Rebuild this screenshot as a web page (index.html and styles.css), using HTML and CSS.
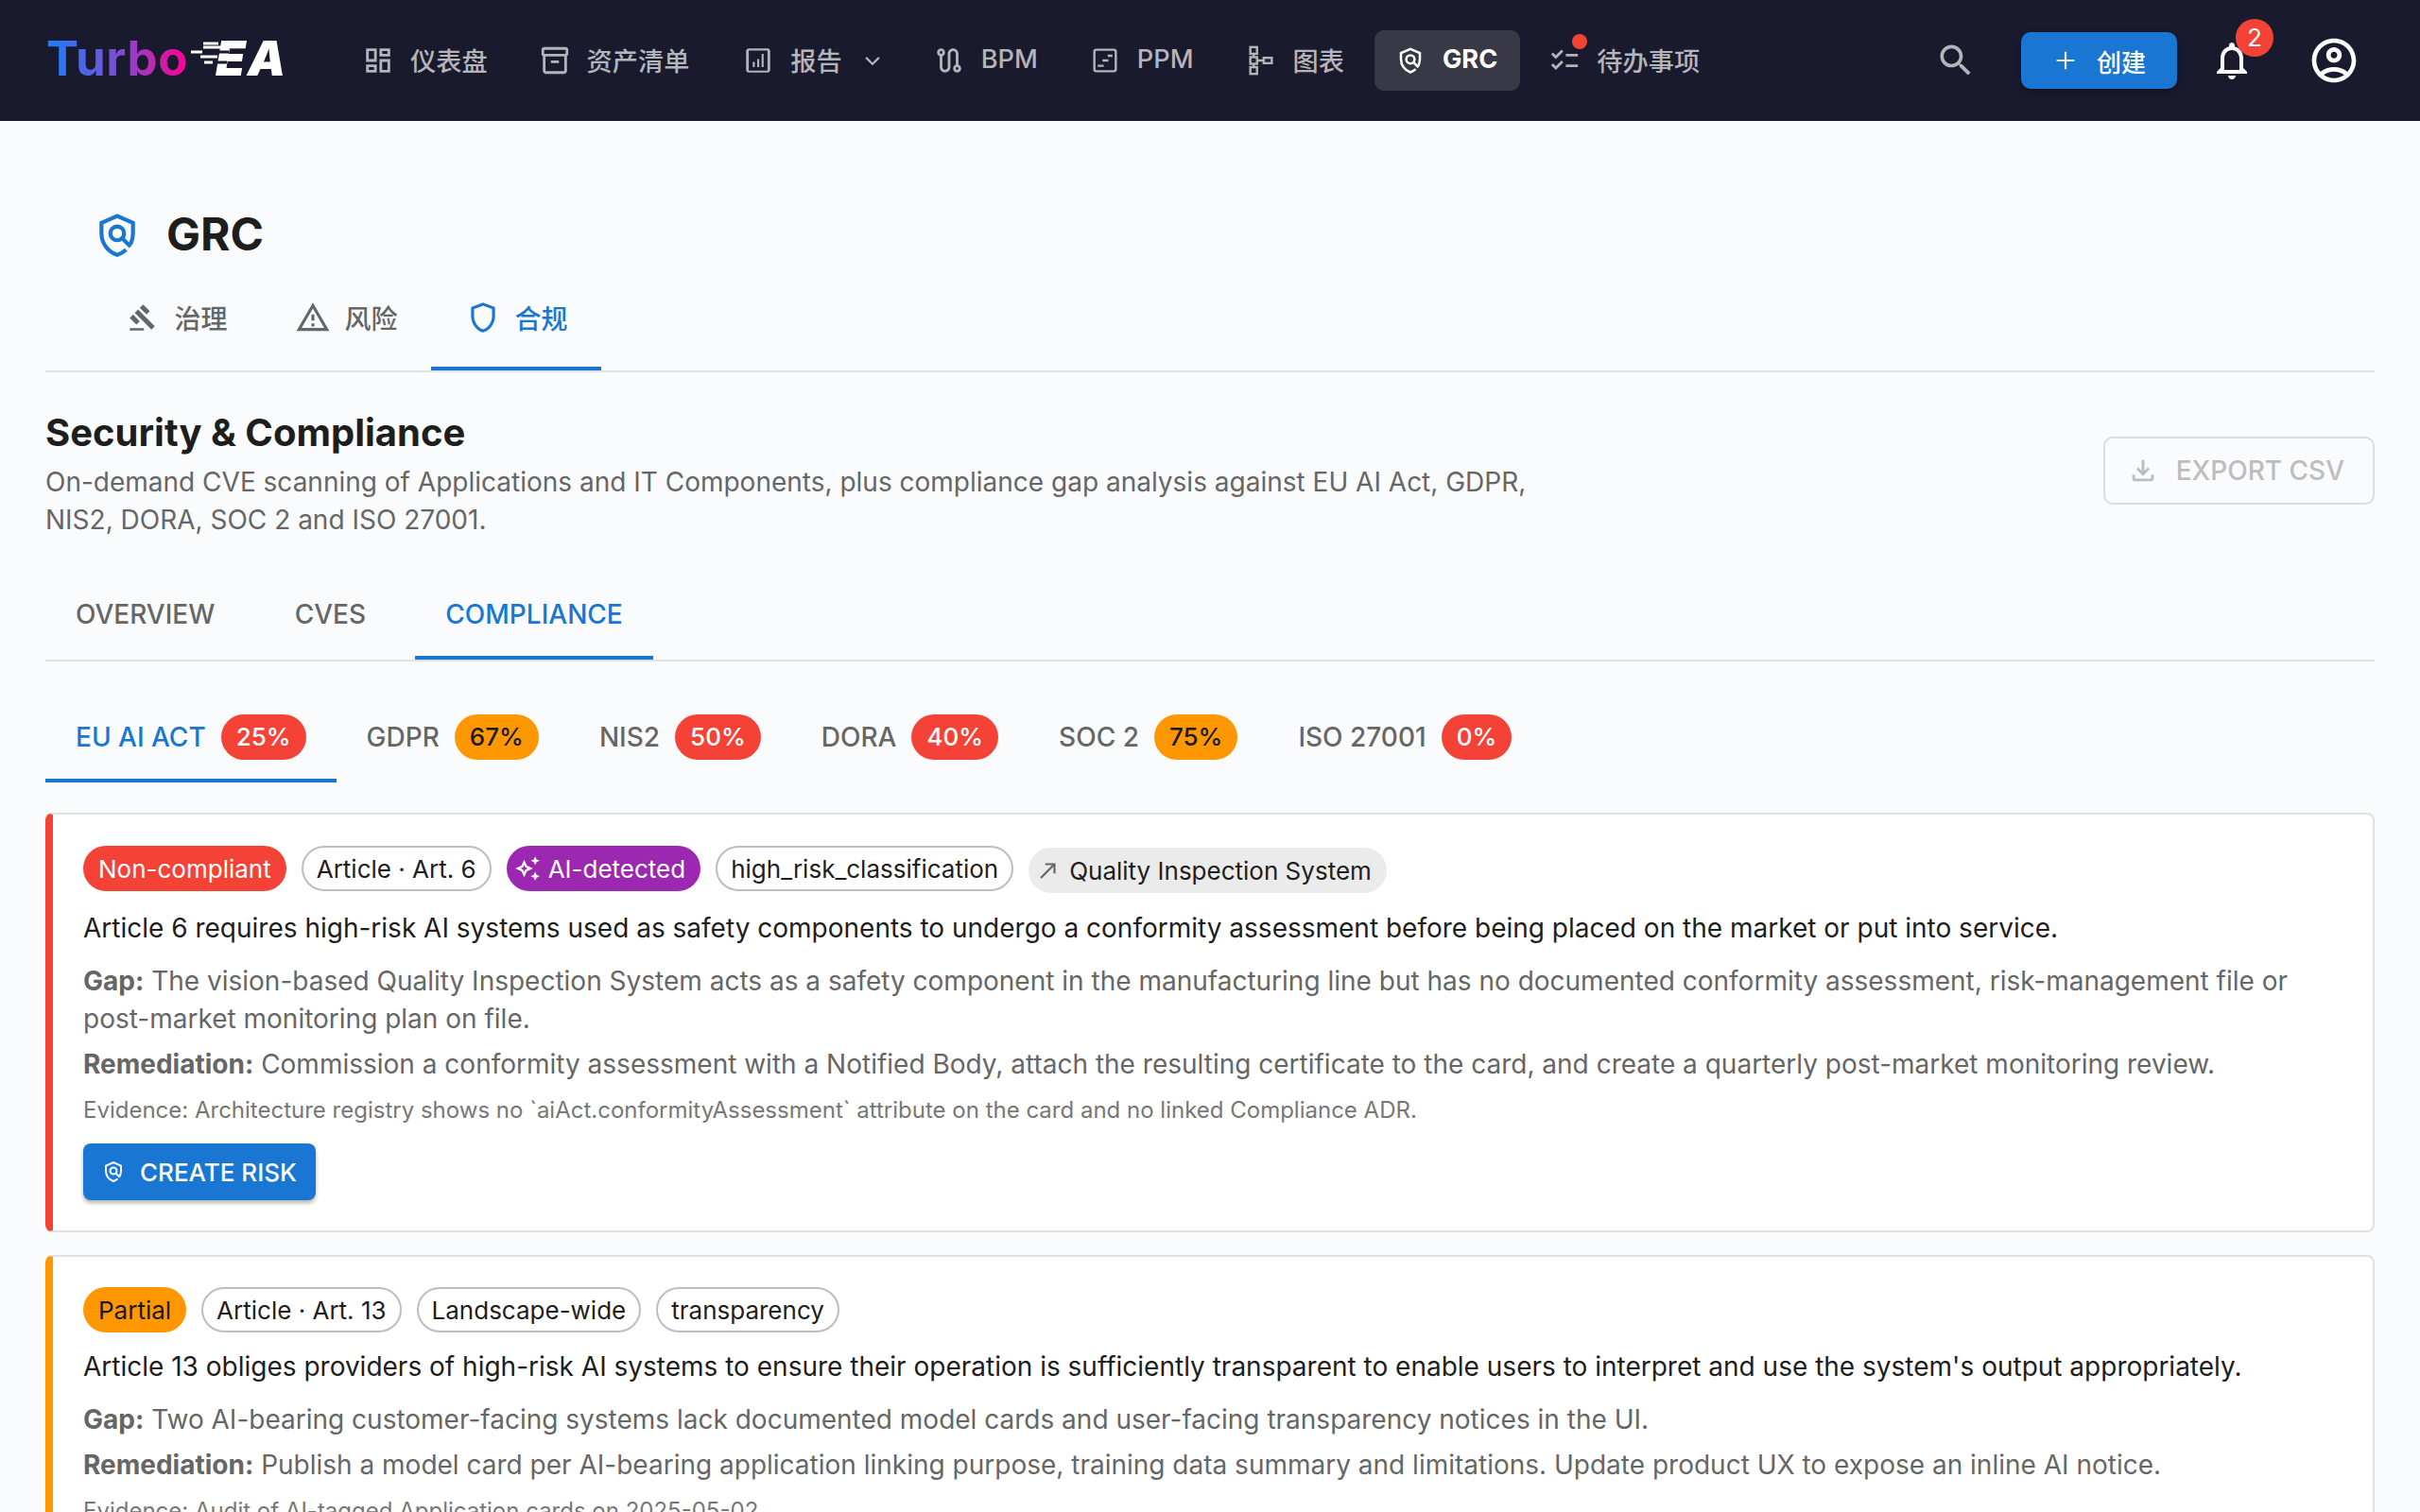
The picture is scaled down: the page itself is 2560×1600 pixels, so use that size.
FILE: index.html
```html
<!DOCTYPE html>
<html>
<head>
    <title>GRC - Turbo EA</title>
    <link rel="stylesheet" href="styles.css">
</head>
<body>
    <header class="navbar">
        <div class="logo">
            <span class="logo-turbo">Turbo</span>
            <span class="logo-ea">EA</span>
            <svg class="logo-lines" viewBox="0 0 60 34">
                <path class="logo-cut" d="M22 16h20M24 27h16" />
                <path d="M15 7h16M15 11h20M2 16h12M12 21h18M16 27h9" />
            </svg>
        </div>
        <nav class="nav-menu">
            <a class="nav-item"><span class="nav-icon"><svg viewBox="0 0 24 24"><path d="M19 5v2h-4V5h4M9 5v6H5V5h4m10 8v6h-4v-6h4M9 17v2H5v-2h4M21 3h-8v6h8V3zM11 3H3v10h8V3zm10 8h-8v10h8V11zm-10 4H3v6h8v-6z"/></svg></span>仪表盘</a>
            <a class="nav-item"><span class="nav-icon"><svg viewBox="0 0 24 24"><path d="M20 2H4c-1 0-2 .9-2 2v3.01c0 .72.43 1.34 1 1.69V20c0 1.1 1.1 2 2 2h14c.9 0 2-.9 2-2V8.7c.57-.35 1-.97 1-1.69V4c0-1.1-1-2-2-2zm-1 18H5V9h14v11zm1-13H4V4h16v3zM9 12h6v2H9z"/></svg></span>资产清单</a>
            <a class="nav-item nav-item-menu"><span class="nav-icon"><svg viewBox="0 0 24 24"><path d="M19 3H5c-1.1 0-2 .9-2 2v14c0 1.1.9 2 2 2h14c1.1 0 2-.9 2-2V5c0-1.100-.9-2-2-2zm0 16.500H5V4.500h14zM8 13h1.500v4H8zm3.300-2h1.500v6h-1.500zm3.300-4h1.500v10h-1.500z"/></svg></span>报告<svg class="nav-chevron" viewBox="0 0 24 24"><path d="M6.500 9.500 12 15l5.500-5.500"/></svg></a>
            <a class="nav-item"><span class="nav-icon"><svg viewBox="0 0 24 24"><path d="M19 15.180V7c0-2.210-1.790-4-4-4s-4 1.790-4 4v10c0 1.100-.9 2-2 2s-2-.9-2-2V8.820C8.160 8.400 9 7.300 9 6c0-1.660-1.340-3-3-3S3 4.340 3 6c0 1.300.84 2.400 2 2.820V17c0 2.210 1.790 4 4 4s4-1.790 4-4V7c0-1.100.9-2 2-2s2 .9 2 2v8.180c-1.160.41-2 1.510-2 2.820 0 1.660 1.340 3 3 3s3-1.340 3-3c0-1.300-.84-2.400-2-2.820zM6 5c.55 0 1 .45 1 1s-.45 1-1 1-1-.45-1-1 .45-1 1-1zm12 14c-.55 0-1-.45-1-1s.45-1 1-1 1 .45 1 1-.45 1-1 1z"/></svg></span>BPM</a>
            <a class="nav-item"><span class="nav-icon"><svg class="icon-line" viewBox="0 0 24 24"><rect x="4" y="4" width="16" height="16" rx="1.500"/><path d="M14 8.500h3.500M10 12h4.500M6.500 16H11"/></svg></span>PPM</a>
            <a class="nav-item"><span class="nav-icon"><svg class="icon-line" viewBox="0 0 24 24"><rect x="4" y="2" width="5" height="5"/><rect x="4" y="9.500" width="5" height="5"/><rect x="4" y="17" width="5" height="5"/><rect x="14" y="10" width="6" height="4"/><path d="M6.500 7v2.500M6.500 14.500V17M9 12h5"/></svg></span>图表</a>
            <a class="nav-item nav-item-active"><span class="nav-icon"><svg class="icon-policy" viewBox="0 0 24 24"><path d="M16.500 19.300C15.200 20.500 13.700 21.400 12 22 7 20.300 4 15.800 4 11V5.700l8-3.500 8 3.500V11c0 1.900-.5 3.800-1.300 5.500"/><circle cx="12" cy="11" r="3.500"/><path d="M14.600 13.600 18.800 17.800"/></svg></span>GRC</a>
            <a class="nav-item"><span class="nav-icon"><svg viewBox="0 0 24 24"><path d="M22 7h-9v2h9V7zm0 8h-9v2h9v-2zM5.540 11 2 7.460l1.410-1.410 2.120 2.120 4.240-4.240 1.410 1.410L5.540 11zm0 8L2 15.460l1.410-1.410 2.120 2.120 4.240-4.240 1.410 1.410L5.540 19z"/></svg><span class="todo-dot"></span></span>待办事项</a>
        </nav>
        <div class="nav-right">
            <svg class="search-icon" viewBox="0 0 24 24"><path d="M15.500 14h-.79l-.28-.27C15.410 12.590 16 11.110 16 9.500 16 5.910 13.090 3 9.500 3S3 5.910 3 9.500 5.910 16 9.500 16c1.610 0 3.090-.59 4.230-1.570l.27.28v.79l5 4.990L20.490 19l-4.990-5zm-6 0C7.010 14 5 11.990 5 9.500S7.010 5 9.500 5 14 7.010 14 9.500 11.990 14 9.500 14z"/></svg>
            <button class="create-btn"><svg viewBox="0 0 24 24"><path d="M19 12.800h-6.200V19h-1.600v-6.200H5v-1.600h6.200V5h1.600v6.200H19z"/></svg>创建</button>
            <div class="bell">
                <svg viewBox="0 0 24 24"><path d="M12 22c1.100 0 2-.9 2-2h-4c0 1.100.9 2 2 2zm6-6v-5c0-3.070-1.630-5.640-4.500-6.320V4c0-.83-.67-1.500-1.500-1.500s-1.500.67-1.500 1.500v.68C7.640 5.360 6 7.920 6 11v5l-2 2v1h16v-1l-2-2zm-2 1H8v-6c0-2.480 1.510-4.500 4-4.500s4 2.020 4 4.500v6z"/></svg>
                <span class="bell-badge">2</span>
            </div>
            <svg class="account-icon" viewBox="0 0 24 24"><path d="M12 2C6.480 2 2 6.480 2 12s4.480 10 10 10 10-4.480 10-10S17.520 2 12 2zM7.350 18.500C8.660 17.560 10.260 17 12 17s3.340.56 4.650 1.500c-1.310.94-2.910 1.500-4.650 1.500s-3.340-.56-4.650-1.500zm10.790-1.380C16.450 15.800 14.320 15 12 15s-4.450.8-6.140 2.120C4.700 15.730 4 13.950 4 12c0-4.420 3.580-8 8-8s8 3.580 8 8c0 1.950-.7 3.730-1.860 5.120zM12 6c-1.930 0-3.500 1.570-3.500 3.500S10.070 13 12 13s3.500-1.570 3.500-3.500S13.930 6 12 6zm0 5c-.83 0-1.500-.67-1.500-1.500S11.170 8 12 8s1.500.67 1.500 1.500S12.830 11 12 11z"/></svg>
        </div>
    </header>

    <main class="page">
        <div class="page-title">
            <svg class="icon-policy" viewBox="0 0 24 24"><path d="M16.500 19.300C15.200 20.500 13.700 21.400 12 22 7 20.300 4 15.800 4 11V5.700l8-3.500 8 3.500V11c0 1.900-.5 3.800-1.300 5.500"/><circle cx="12" cy="11" r="3.500"/><path d="M14.600 13.600 18.800 17.800"/></svg>
            <h1>GRC</h1>
        </div>

        <div class="module-tabs">
            <a class="module-tab"><span class="module-icon"><svg class="gavel" viewBox="0 0 24 24"><path d="M1 21h12v2H1v-2zM5.240 8.070l2.830-2.830 14.140 14.140-2.830 2.830L5.240 8.070zM12.320 1l5.660 5.660-2.830 2.830-5.660-5.660L12.320 1zM3.830 9.480l5.660 5.660-2.830 2.830L1 12.310l2.830-2.830z"/></svg></span>治理</a>
            <a class="module-tab"><span class="module-icon"><svg viewBox="0 0 24 24"><path d="M12 5.990 19.530 19H4.470L12 5.990M12 2 1 21h22L12 2zm1 14h-2v2h2v-2zm0-6h-2v4h2v-4z"/></svg></span>风险</a>
            <a class="module-tab module-tab-active"><span class="module-icon"><svg viewBox="0 0 24 24"><path d="M12 2 4 5v6.090c0 5.050 3.410 9.760 8 10.910 4.590-1.150 8-5.860 8-10.910V5l-8-3zm6 9.090c0 4-2.550 7.700-6 8.830-3.450-1.130-6-4.820-6-8.830v-4.700l6-2.250 6 2.250v4.700z"/></svg></span>合规</a>
        </div>

        <section class="section-head">
            <div>
                <h2>Security &amp; Compliance</h2>
                <p>On-demand CVE scanning of Applications and IT Components, plus compliance gap analysis against EU AI Act, GDPR, NIS2, DORA, SOC 2 and ISO 27001.</p>
            </div>
            <button class="export-btn"><svg viewBox="0 0 24 24"><path d="M18 15v3H6v-3H4v3c0 1.100.9 2 2 2h12c1.100 0 2-.9 2-2v-3h-2zm-1-4-1.410-1.410L13 12.170V4h-2v8.170L8.410 9.590 7 11l5 5 5-5z"/></svg>Export CSV</button>
        </section>

        <div class="section-tabs">
            <a class="section-tab">Overview</a>
            <a class="section-tab">CVEs</a>
            <a class="section-tab tab-active">Compliance</a>
        </div>

        <div class="framework-tabs">
            <a class="framework-tab tab-active">EU AI ACT<span class="score score-red">25%</span></a>
            <a class="framework-tab">GDPR<span class="score score-orange">67%</span></a>
            <a class="framework-tab">NIS2<span class="score score-red">50%</span></a>
            <a class="framework-tab">DORA<span class="score score-red">40%</span></a>
            <a class="framework-tab">SOC 2<span class="score score-orange">75%</span></a>
            <a class="framework-tab">ISO 27001<span class="score score-red">0%</span></a>
        </div>

        <article class="finding finding-red">
            <div class="chips">
                <span class="chip chip-red">Non-compliant</span>
                <span class="chip chip-outline">Article · Art. 6</span>
                <span class="chip chip-purple"><svg viewBox="0 0 24 24"><path d="M19 9l1.250-2.750L23 5l-2.750-1.250L19 1l-1.250 2.750L15 5l2.750 1.250zm0 6-1.250 2.750L15 19l2.750 1.250L19 23l1.250-2.750L23 19l-2.750-1.250zm-7.500-5.500L9 4 6.500 9.500 1 12l5.500 2.500L9 20l2.500-5.500L17 12l-5.500-2.500zm-1.510 3.490L9 15.170l-.99-2.180L5.830 12l2.180-.99L9 8.830l.99 2.180 2.180.99-2.180.99z"/></svg>AI-detected</span>
                <span class="chip chip-outline">high_risk_classification</span>
                <span class="chip chip-link"><svg viewBox="0 0 24 24"><path d="M9 5v2h6.590L4 18.590 5.410 20 17 8.410V15h2V5H9z"/></svg>Quality Inspection System</span>
            </div>
            <p class="requirement">Article 6 requires high-risk AI systems used as safety components to undergo a conformity assessment before being placed on the market or put into service.</p>
            <p class="detail detail-gap"><b>Gap:</b> The vision-based Quality Inspection System acts as a safety component in the manufacturing line but has no documented conformity assessment, risk-management file or post-market monitoring plan on file.</p>
            <p class="detail"><b>Remediation:</b> Commission a conformity assessment with a Notified Body, attach the resulting certificate to the card, and create a quarterly post-market monitoring review.</p>
            <p class="evidence">Evidence: Architecture registry shows no `aiAct.conformityAssessment` attribute on the card and no linked Compliance ADR.</p>
            <button class="risk-btn"><svg class="icon-policy" viewBox="0 0 24 24"><path d="M16.500 19.300C15.200 20.500 13.700 21.400 12 22 7 20.300 4 15.800 4 11V5.700l8-3.500 8 3.500V11c0 1.900-.5 3.800-1.300 5.500"/><circle cx="12" cy="11" r="3.500"/><path d="M14.600 13.600 18.800 17.800"/></svg>Create risk</button>
        </article>

        <article class="finding finding-orange">
            <div class="chips">
                <span class="chip chip-orange">Partial</span>
                <span class="chip chip-outline">Article · Art. 13</span>
                <span class="chip chip-outline">Landscape-wide</span>
                <span class="chip chip-outline">transparency</span>
            </div>
            <p class="requirement">Article 13 obliges providers of high-risk AI systems to ensure their operation is sufficiently transparent to enable users to interpret and use the system's output appropriately.</p>
            <p class="detail detail-gap"><b>Gap:</b> Two AI-bearing customer-facing systems lack documented model cards and user-facing transparency notices in the UI.</p>
            <p class="detail"><b>Remediation:</b> Publish a model card per AI-bearing application linking purpose, training data summary and limitations. Update product UX to expose an inline AI notice.</p>
            <p class="evidence">Evidence: Audit of AI-tagged Application cards on 2025-05-02.</p>
        </article>
    </main>
</body>
</html>
```

FILE: styles.css
```css
html, body {
    height: 100%;
}

body {
    margin: 0;
    height: 100vh;
    overflow: hidden;
    background-color: #fafbfd;
    color: #1e1e1e;
    font-family: Inter, "Noto Sans CJK SC", sans-serif;
    font-size: 28px;
}

h1, h2, p {
    margin: 0;
}

svg {
    fill: currentColor;
    flex-shrink: 0;
}

button {
    font-family: inherit;
    border: none;
    cursor: pointer;
}

/* top bar */
.navbar {
    display: flex;
    align-items: center;
    height: 128px;
    padding: 0 63px 0 49px;
    background-color: #1a1a2e;
    box-sizing: border-box;
}

.logo {
    display: flex;
    align-items: center;
    position: relative;
    width: 256px;
    height: 50px;
    margin-top: -4px;
    font-size: 51px;
    line-height: 50px;
    font-weight: 700;
}

.logo-turbo {
    background: linear-gradient(90deg, #1a7fff 0%, #7a4fd0 50%, #ff0090 100%);
    -webkit-background-clip: text;
    background-clip: text;
    color: transparent;
    letter-spacing: 0.6px;
}

.logo-lines {
    position: absolute;
    left: 151px;
    top: 2px;
    width: 60px;
    height: 34px;
    fill: none;
    stroke: #fff;
    stroke-width: 3;
}

.logo-cut {
    stroke: #1a1a2e;
}

.logo-ea {
    position: absolute;
    left: 179px;
    color: #fff;
    font-style: italic;
    font-weight: 900;
    letter-spacing: 2px;
}

.nav-menu {
    display: flex;
    align-items: center;
    gap: 11px;
    margin-left: 59px;
}

.nav-item {
    display: flex;
    align-items: center;
    height: 64px;
    padding: 0 24px 3px 16px;
    border-radius: 10px;
    box-sizing: border-box;
    color: #b4b4bb;
    font-size: 27.2px;
    font-weight: 500;
    white-space: nowrap;
}

.nav-item-menu {
    margin-left: 2px;
}

.nav-icon {
    position: relative;
    display: flex;
    align-items: center;
    justify-content: center;
    width: 40px;
    height: 40px;
    margin: 3px 14px 0 0;
}

.nav-icon svg {
    width: 34px;
    height: 34px;
}

.nav-icon .icon-line {
    fill: none;
    stroke: currentColor;
    stroke-width: 1.700;
}

.nav-icon .icon-policy {
    width: 30px;
    height: 30px;
}

.icon-policy {
    fill: none;
    stroke: currentColor;
    stroke-width: 2;
}

.nav-chevron {
    width: 30px;
    height: 30px;
    margin: 3px -5px 0 17px;
    fill: none;
    stroke: currentColor;
    stroke-width: 1.800;
}

.nav-item-active {
    margin-left: -3px;
    padding-left: 18px;
    background-color: #383846;
    color: #fff;
    font-weight: 700;
}

.todo-dot {
    position: absolute;
    top: -8px;
    right: -4px;
    width: 16px;
    height: 16px;
    border-radius: 50%;
    background-color: #f44336;
}

.nav-right {
    display: flex;
    align-items: center;
    margin-left: auto;
}

.search-icon {
    width: 44px;
    height: 44px;
    margin-right: 47px;
    color: #b4b4bb;
}

.create-btn {
    display: flex;
    align-items: center;
    width: 165px;
    height: 60px;
    padding: 0 0 0 31px;
    border-radius: 10px;
    background-color: #1976d2;
    color: #fff;
    font-size: 26px;
    font-weight: 500;
    box-shadow: 0 3px 6px rgba(0, 0, 0, 0.3);
}

.create-btn svg {
    width: 32px;
    height: 32px;
    margin-right: 17px;
}

.bell {
    position: relative;
    display: flex;
    margin-left: 34px;
    color: #fff;
}

.bell svg {
    width: 48px;
    height: 48px;
}

.bell-badge {
    position: absolute;
    top: -20px;
    left: 28px;
    width: 40px;
    height: 40px;
    border-radius: 50%;
    background-color: #f44336;
    font-size: 26px;
    line-height: 40px;
    text-align: center;
}

.account-icon {
    width: 56px;
    height: 56px;
    margin-left: 56px;
    color: #fff;
}

/* page */
.page {
    padding: 93px 48px 0;
}

.page-title {
    display: flex;
    align-items: center;
    gap: 27px;
    height: 52px;
    padding-left: 51px;
}

.page-title svg {
    width: 50px;
    height: 50px;
    margin-top: 3px;
    color: #1976d2;
}

.page-title h1 {
    font-size: 48px;
    font-weight: 700;
}

.module-tabs {
    display: flex;
    height: 94px;
    margin-top: 25px;
    padding-left: 48px;
    border-bottom: 2px solid #e0e0e0;
}

.module-tab {
    position: relative;
    display: flex;
    align-items: center;
    justify-content: center;
    width: 180px;
    padding-bottom: 18px;
    box-sizing: border-box;
    color: #666;
    font-weight: 500;
}

.module-icon {
    display: flex;
    align-items: center;
    justify-content: center;
    width: 40px;
    margin-right: 13px;
}

.module-icon svg {
    width: 38px;
    height: 38px;
}

.module-icon .gavel {
    width: 30px;
    height: 30px;
}

.module-tab-active {
    color: #1976d2;
}

.module-tab-active::after,
.tab-active::after {
    content: "";
    position: absolute;
    left: 0;
    right: 0;
    bottom: 0;
    height: 4px;
    background-color: #1976d2;
}

.section-head {
    display: flex;
    align-items: center;
    justify-content: space-between;
    margin-top: 32px;
}

.section-head h2 {
    font-size: 40px;
    line-height: 64px;
    font-weight: 700;
}

.section-head p {
    max-width: 1620px;
    color: #666;
    line-height: 40px;
}

.export-btn {
    display: flex;
    align-items: center;
    height: 72px;
    padding: 0 30px 0 23px;
    border: 2px solid #dcdde0;
    border-radius: 10px;
    background: none;
    color: #bdbdbd;
    font-size: 28px;
    font-weight: 500;
    text-transform: uppercase;
}

.export-btn svg {
    width: 34px;
    height: 34px;
    margin-right: 18px;
}

.section-tabs {
    display: flex;
    margin-top: 32px;
    border-bottom: 2px solid #e0e0e0;
}

.section-tab {
    position: relative;
    display: flex;
    align-items: center;
    justify-content: center;
    height: 96px;
    min-width: 180px;
    padding: 0 32px;
    box-sizing: border-box;
    color: #666;
    font-weight: 500;
    text-transform: uppercase;
}

.framework-tabs {
    display: flex;
    margin-top: 32px;
}

.framework-tab {
    position: relative;
    display: flex;
    align-items: center;
    gap: 16px;
    height: 96px;
    padding: 0 32px;
    box-sizing: border-box;
    color: #666;
    font-weight: 500;
}

.tab-active {
    color: #1976d2;
}

.score {
    height: 48px;
    padding: 0 16px;
    border-radius: 24px;
    font-size: 26px;
    line-height: 48px;
}

.score-red {
    background-color: #f44336;
    color: #fff;
}

.score-orange {
    background-color: #ff9800;
    color: #1a1a1a;
}

/* findings */
.finding {
    margin-top: 32px;
    padding: 33px 32px 32px;
    border: 2px solid #e0e0e0;
    border-left-width: 8px;
    border-radius: 8px;
    background-color: #fff;
}

.finding + .finding {
    margin-top: 24px;
}

.finding-red {
    border-left-color: #f44336;
}

.finding-orange {
    padding-top: 32px;
    border-left-color: #ff9800;
}

.chips {
    display: flex;
    align-items: flex-start;
    gap: 16px;
}

.chip {
    display: flex;
    align-items: center;
    height: 48px;
    padding: 0 16px;
    border-radius: 24px;
    box-sizing: border-box;
    font-size: 26px;
    white-space: nowrap;
}

.chip-red {
    background-color: #f44336;
    color: #fff;
}

.chip-orange {
    background-color: #ff9800;
    color: #1a1a1a;
}

.chip-purple {
    padding-left: 8px;
    background-color: #9c27b0;
    color: #fff;
}

.chip-purple svg {
    width: 28px;
    height: 28px;
    margin-right: 8px;
}

.chip-outline {
    padding: 0 14px;
    border: 2px solid #bdbdbd;
    color: #1e1e1e;
}

.chip-link {
    margin-top: 2px;
    padding-left: 8px;
    background-color: #ebebeb;
}

.chip-link svg {
    width: 26px;
    height: 26px;
    margin-right: 9px;
    color: #666;
}

.requirement {
    margin-top: 17px;
    line-height: 40px;
}

.finding-orange .requirement {
    margin-top: 16px;
}

.detail {
    margin-top: 8px;
    color: #666;
    line-height: 40px;
}

.detail-gap {
    margin-top: 16px;
}

.detail b {
    font-weight: 700;
}

.evidence {
    margin-top: 11px;
    color: #777;
    font-size: 24px;
    line-height: 36px;
}

.risk-btn {
    display: flex;
    align-items: center;
    height: 60px;
    margin-top: 17px;
    padding: 0 20px;
    border-radius: 8px;
    background-color: #1976d2;
    color: #fff;
    font-size: 26px;
    font-weight: 500;
    text-transform: uppercase;
    box-shadow: 0 3px 4px rgba(0, 0, 0, 0.3);
}

.risk-btn svg {
    width: 24px;
    height: 24px;
    margin-right: 16px;
}
```
